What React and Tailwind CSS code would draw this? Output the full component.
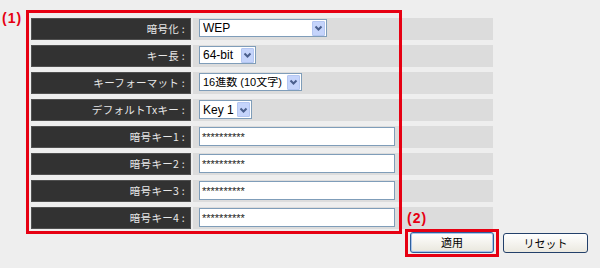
import React from "react";

const jp = { fontFamily: '"Noto Sans CJK JP", "Noto Sans", sans-serif' };
const ar = { fontFamily: '"Liberation Sans", Arial, "Noto Sans CJK JP", sans-serif' };

function Arrow() {
  return (
    <div className="w-[13px] h-[15px] bg-[#c5d4fb] border border-[#b4c6f1] rounded-[1px] flex items-center justify-center shrink-0">
      <svg width="9" height="6" viewBox="0 0 9 6">
        <polyline points="1.5,1.5 4.5,4.5 7.5,1.5" fill="none" stroke="#4a5f8c" strokeWidth="2" />
      </svg>
    </div>
  );
}

function Select({ w, text, size = "text-[12px]" }) {
  return (
    <div className={`${w} h-[18px] bg-white border border-[#7f9db9] flex items-center pl-[3px] pr-[1px]`}>
      <span className={`flex-1 ${size} text-black leading-none whitespace-nowrap overflow-hidden`} style={ar}>{text}</span>
      <Arrow />
    </div>
  );
}

function Input() {
  return (
    <div className="w-[196px] h-[19px] bg-white border border-[#7f9db9] pl-[2px] flex items-start">
      <span className="text-[11px] text-[#222] leading-none mt-[4px]" style={ar}>**********</span>
    </div>
  );
}

function Row({ label, children }) {
  return (
    <div className="flex gap-[2px] h-[22px]">
      <div className="w-[160px] h-full bg-[#323232] border border-[#505050] flex items-center justify-end pr-[5px]">
        <span className="text-[10.5px] text-[#e8e8e8] leading-none whitespace-nowrap tracking-[0.3px]" style={jp}>{label}</span>
      </div>
      <div className="w-[300px] h-full bg-[#dcdcdc] pl-[6px] pt-[1px] flex items-start">{children}</div>
    </div>
  );
}

export default function App() {
  return (
    <div className="relative w-[600px] h-[268px] bg-[#eeeeee] overflow-hidden">
      <div className="pl-[31px] pt-[18px] flex flex-col gap-[5px]">
        <Row label="暗号化 :"><Select w="w-[128px]" text="WEP" /></Row>
        <Row label="キー長 :"><Select w="w-[57px]" text="64-bit" /></Row>
        <Row label="キーフォーマット :">
          <Select w="w-[103px]" text="16進数 (10文字)" size="text-[11px]" />
        </Row>
        <Row label="デフォルトTxキー :">
          <div className="w-[53px] h-[19px] bg-white border border-[#7f9db9] flex items-center pl-[3px] pr-[1px]">
            <span className="flex-1 text-[12px] text-black leading-none whitespace-nowrap" style={ar}>Key 1</span>
            <Arrow />
          </div>
        </Row>
        <Row label="暗号キー1 :"><Input /></Row>
        <Row label="暗号キー2 :"><Input /></Row>
        <Row label="暗号キー3 :"><Input /></Row>
        <Row label="暗号キー4 :"><Input /></Row>
      </div>

      <div className="flex gap-[9px] pl-[410px] mt-[3px]">
        <button className="w-[84px] h-[21px] rounded-[3px] border border-[#2f5f9c] bg-gradient-to-b from-[#ffffff] to-[#e9e7dd] shadow-[inset_0_0_0_1px_#a9c4ea] flex items-center justify-center">
          <span className="text-[11px] text-black leading-none" style={jp}>適用</span>
        </button>
        <button className="w-[85px] h-[20px] mt-[1px] rounded-[3px] border border-[#23406a] bg-gradient-to-b from-[#ffffff] to-[#ebe9e0] flex items-center justify-center">
          <span className="text-[11px] text-black leading-none" style={jp}>リセット</span>
        </button>
      </div>

      <div className="absolute left-[26px] top-[10px] w-[376px] h-[224px] border-[3px] border-[#e60012]" />
      <div className="absolute left-[405px] top-[229px] w-[94px] h-[28px] border-[3px] border-[#e60012]" />
      <div className="absolute left-[2px] top-[11px] text-[14px] font-bold text-[#e60012] leading-none tracking-[1px]" style={ar}>(1)</div>
      <div className="absolute left-[407px] top-[211px] text-[14px] font-bold text-[#e60012] leading-none tracking-[1px]" style={ar}>(2)</div>
    </div>
  );
}
